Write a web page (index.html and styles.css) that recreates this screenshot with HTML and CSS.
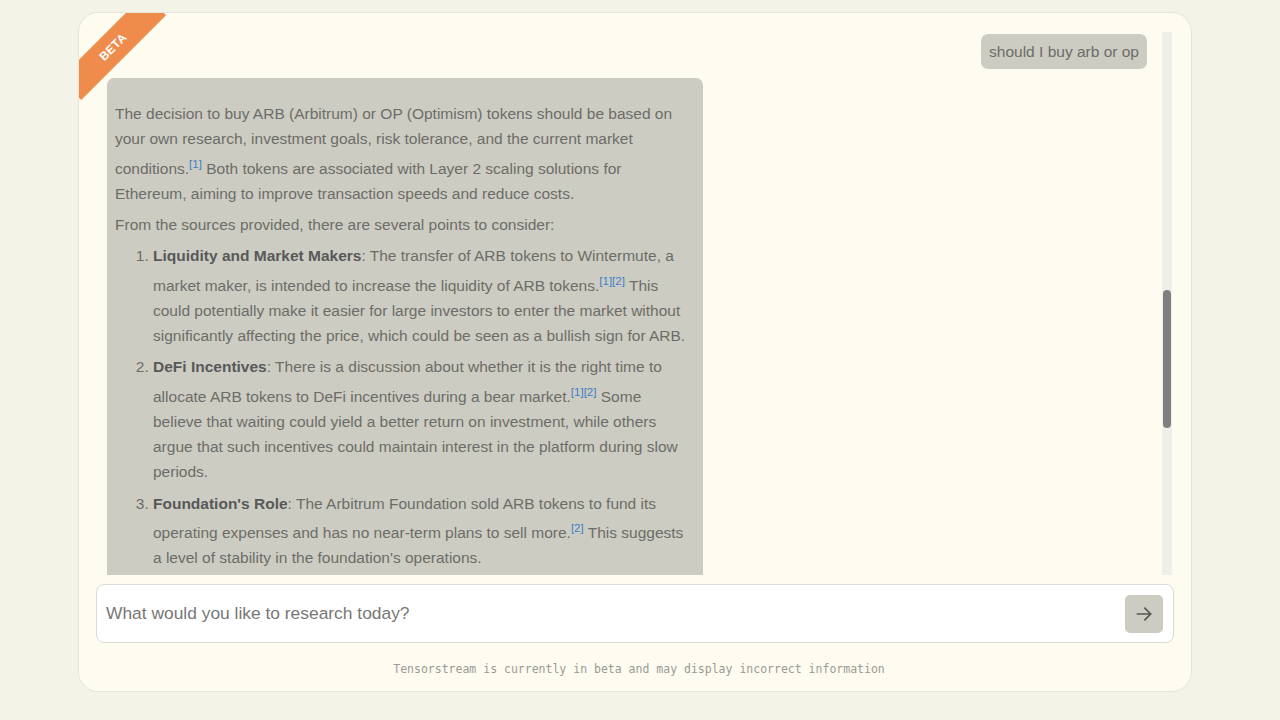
FILE: index.html
```html
<!DOCTYPE html>
<html>
<head>
<meta charset="utf-8">
<link rel="stylesheet" href="styles.css">
</head>
<body>
<div class="page">
  <div class="card">
    <div class="ribbon">BETA</div>
    <div class="chat-row">
      <div class="messages">
        <div class="msg user"><div class="bubble user-bubble">should I buy arb or op</div></div>
        <div class="msg bot">
          <div class="bubble bot-bubble">
            <p>The decision to buy ARB (Arbitrum) or OP (Optimism) tokens should be based on your own research, investment goals, risk tolerance, and the current market conditions.<sup>[1]</sup> Both tokens are associated with Layer 2 scaling solutions for Ethereum, aiming to improve transaction speeds and reduce costs.</p>
            <p>From the sources provided, there are several points to consider:</p>
            <ol>
              <li><b>Liquidity and Market Makers</b>: The transfer of ARB tokens to Wintermute, a market maker, is intended to increase the liquidity of ARB tokens.<sup>[1]</sup><sup>[2]</sup> This could potentially make it easier for large investors to enter the market without significantly affecting the price, which could be seen as a bullish sign for ARB.</li>
              <li><b>DeFi Incentives</b>: There is a discussion about whether it is the right time to allocate ARB tokens to DeFi incentives during a bear market.<sup>[1]</sup><sup>[2]</sup> Some believe that waiting could yield a better return on investment, while others argue that such incentives could maintain interest in the platform during slow periods.</li>
              <li><b>Foundation's Role</b>: The Arbitrum Foundation sold ARB tokens to fund its operating expenses and has no near-term plans to sell more.<sup>[2]</sup> This suggests a level of stability in the foundation's operations.</li>
              <li><b>Market Sentiment</b>: The overall market sentiment and the performance of both networks should also be considered before making any decision.</li>
            </ol>
          </div>
        </div>
      </div>
      <div class="track"><div class="thumb"></div></div>
    </div>
    <div class="input-box">
      <input class="input" type="text" placeholder="What would you like to research today?">
      <button class="send" type="button" aria-label="Send">
        <svg width="20" height="20" viewBox="0 0 24 24" fill="none" stroke="#555" stroke-width="2" stroke-linecap="round" stroke-linejoin="round"><path d="M4 12h16"/><path d="M13 5l7 7-7 7"/></svg>
      </button>
    </div>
    <div class="footer">Tensorstream is currently in beta and may display incorrect information</div>
  </div>
</div>
</body>
</html>
```

FILE: styles.css
```css
* { box-sizing: border-box; }
html, body { margin: 0; padding: 0; }
body {
  background: #f3f4e7;
  font-family: "Liberation Sans", Arial, sans-serif;
  width: 1280px;
  height: 720px;
  overflow: hidden;
}
.page {
  padding: 12px 88px 0 78px;
}
.card {
  position: relative;
  overflow: hidden;
  height: 680px;
  background: #fefcf0;
  border: 1px solid #e5e5da;
  border-radius: 20px;
  padding: 19px 17px 0 17px;
  display: flex;
  flex-direction: column;
}
.ribbon {
  position: absolute;
  left: -26px;
  top: 19px;
  width: 120px;
  height: 30px;
  background: #ef8c4b;
  color: #fff;
  font-size: 12px;
  font-weight: bold;
  letter-spacing: 0.3px;
  display: flex;
  align-items: center;
  justify-content: center;
  transform: rotate(-45deg);
}
.chat-row {
  display: flex;
  height: 543px;
  padding: 0 2px 0 11px;
  gap: 15px;
}
.messages {
  flex: 1;
  overflow: hidden;
  padding-top: 2px;
  display: flex;
  flex-direction: column;
  gap: 9px;
}
.msg { display: flex; }
.msg.user { justify-content: flex-end; }
.bubble {
  background: #cdccc2;
  border-radius: 7px;
  color: #6c6c68;
}
.user-bubble {
  font-size: 15.5px;
  line-height: 19px;
  padding: 8px 8px;
}
.bot-bubble {
  width: 596px;
  font-size: 15.5px;
  line-height: 25.25px;
  padding: 17px 14px 16px 8px;
  flex-shrink: 0;
}
.bot-bubble p { margin: 6px 0; }
.bot-bubble ol { margin: 6px 0; padding-left: 38px; }
.bot-bubble li { margin-bottom: 6px; }
.bot-bubble b { color: #58585a; }
sup {
  color: #3d7fc8;
  font-size: 11.5px;
  vertical-align: 6px;
}
.track {
  width: 10px;
  background: #efefe9;
  flex-shrink: 0;
}
.thumb {
  margin: 258px auto 0;
  width: 8px;
  height: 138px;
  background: #7f7f7f;
  border-radius: 4px;
}
.input-box {
  margin-top: 9px;
  height: 59px;
  background: #fff;
  border: 1px solid #dcdcd6;
  border-radius: 8px;
  display: flex;
  align-items: center;
  padding: 0 10px 0 9px;
}
.input {
  flex: 1;
  border: none;
  outline: none;
  background: transparent;
  font-family: "Liberation Sans", Arial, sans-serif;
  font-size: 17.4px;
  color: #333;
  padding: 0;
}
.input::placeholder { color: #777; }
.send {
  width: 38px;
  height: 38px;
  border: none;
  border-radius: 5px;
  background: #cdccc2;
  display: flex;
  align-items: center;
  justify-content: center;
  padding: 0;
}
.footer {
  text-align: center;
  font-family: "DejaVu Sans Mono", monospace;
  font-size: 11.5px;
  color: #9a9a96;
  margin-top: 19px;
  padding-left: 8px;
}
```
